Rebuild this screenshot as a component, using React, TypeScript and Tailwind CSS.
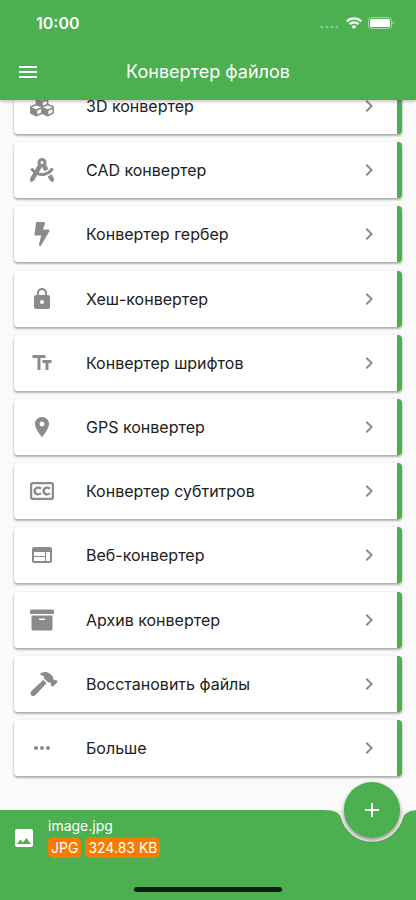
import type { ReactNode } from "react";
import { FaArchive, FaBolt, FaCubes, FaDraftingCompass, FaHammer, FaRegClosedCaptioning } from "react-icons/fa";
import { MdAdd, MdChevronRight, MdImage, MdLock, MdMenu, MdMoreHoriz, MdPlace, MdTextFields, MdWeb } from "react-icons/md";

const items: { label: string; icon: ReactNode }[] = [
  { label: "3D конвертер", icon: <FaCubes className="size-6" /> },
  { label: "CAD конвертер", icon: <FaDraftingCompass className="size-6" /> },
  { label: "Конвертер гербер", icon: <FaBolt className="size-6" /> },
  { label: "Хеш-конвертер", icon: <MdLock className="size-6" /> },
  { label: "Конвертер шрифтов", icon: <MdTextFields className="size-6" /> },
  { label: "GPS конвертер", icon: <MdPlace className="size-6" /> },
  { label: "Конвертер субтитров", icon: <FaRegClosedCaptioning className="size-6" /> },
  { label: "Веб-конвертер", icon: <MdWeb className="size-6" /> },
  { label: "Архив конвертер", icon: <FaArchive className="size-6" /> },
  { label: "Восстановить файлы", icon: <FaHammer className="ml-1 h-6 w-7" /> },
  { label: "Больше", icon: <MdMoreHoriz className="size-6" /> },
];

function StatusBar() {
  return (
    <div className="flex h-11 items-center justify-between pt-0.5 pr-[22px] pl-9">
      <span className="text-base font-semibold">10:00</span>
      <div className="flex items-center gap-1.5">
        <svg className="mt-2 h-1 w-5" viewBox="0 0 20 4" fill="#fff" fillOpacity=".3">
          <circle cx="2" cy="2" r="1.6" />
          <circle cx="7" cy="2" r="1.6" />
          <circle cx="12" cy="2" r="1.6" />
          <circle cx="17" cy="2" r="1.6" />
        </svg>
        <svg className="h-3 w-4" viewBox="0 0 16 12" fill="none" stroke="#fff" strokeWidth="2.3">
          <path d="M.8 4.4a10.3 10.3 0 0 1 14.4 0" />
          <path d="M3.5 7.3a6.4 6.4 0 0 1 9 0" />
          <path d="M8 12 5.5 9.4a3.6 3.6 0 0 1 5 0z" fill="#fff" stroke="none" />
        </svg>
        <svg className="h-3 w-[26px]" viewBox="0 0 26 12" fill="#fff">
          <rect x=".5" y=".5" width="23" height="11" rx="3" fill="none" stroke="#fff" strokeOpacity=".5" />
          <rect x="2" y="2" width="20" height="8" rx="1.6" />
          <path d="M24.7 4.2c1.4.6 1.4 3 0 3.6z" fillOpacity=".6" />
        </svg>
      </div>
    </div>
  );
}

export default function App() {
  return (
    <div className="flex h-screen flex-col bg-[#fafafa] font-['Inter',sans-serif] text-[#212121]">
      <header className="z-10 h-[100px] shrink-0 bg-[#4caf50] text-white shadow-[0_1px_4px_rgba(0,0,0,0.3)]">
        <StatusBar />
        <div className="grid h-14 grid-cols-[56px_1fr_56px] items-center">
          <button type="button" aria-label="Меню" className="flex size-14 items-center justify-center">
            <MdMenu className="size-6" />
          </button>
          <h1 className="text-center text-lg">Конвертер файлов</h1>
        </div>
      </header>

      <main className="min-h-0 flex-1 overflow-hidden px-[14px]">
        <ul className="-mt-[22px] flex h-[calc(100%+22px)] flex-col justify-between pb-[34px]">
          {items.map((item) => (
            <li key={item.label} className="shrink-0">
              <button
                type="button"
                className="flex h-14 w-full items-center rounded border-r-[5px] border-[#4caf50] bg-white text-left shadow-[0_1px_3px_rgba(0,0,0,0.2),0_2px_2px_rgba(0,0,0,0.2)]"
              >
                <span className="flex w-14 shrink-0 justify-center text-[#8b8b8b]">{item.icon}</span>
                <span className="flex-1 pl-4 text-base">{item.label}</span>
                <MdChevronRight className="mr-4 size-6 text-[#8b8b8b]" />
              </button>
            </li>
          ))}
        </ul>
      </main>

      <footer className="relative h-[90px] shrink-0 bg-[#4caf50] text-white">
        <svg className="absolute top-0 right-0 h-10 w-[92px]" viewBox="-48 0 92 40">
          <path d="M-48 0Q-33 0-31 7.8A32 32 0 0 0 31 7.8Q33 0 48 0z" fill="#f0f0f0" />
        </svg>
        <button
          type="button"
          aria-label="Добавить"
          className="absolute -top-7 right-4 flex size-14 items-center justify-center rounded-full bg-[#4caf50] shadow-[0_2px_4px_rgba(0,0,0,0.4)]"
        >
          <MdAdd className="size-6" />
        </button>
        <div className="flex items-center gap-3 pt-1.5 pl-3">
          <MdImage className="mt-0.5 size-6" />
          <div className="flex flex-col">
            <span className="text-sm leading-5">image.jpg</span>
            <div className="mt-px flex gap-1 text-sm leading-[21px]">
              <span className="rounded-[5px] bg-[#f57c00] px-[3px]">JPG</span>
              <span className="rounded-[5px] bg-[#f57c00] px-[3px]">324.83 KB</span>
            </div>
          </div>
        </div>
        <div className="absolute inset-x-0 bottom-2 mx-auto h-[5px] w-[148px] rounded-full bg-[#151c15]" />
      </footer>
    </div>
  );
}
